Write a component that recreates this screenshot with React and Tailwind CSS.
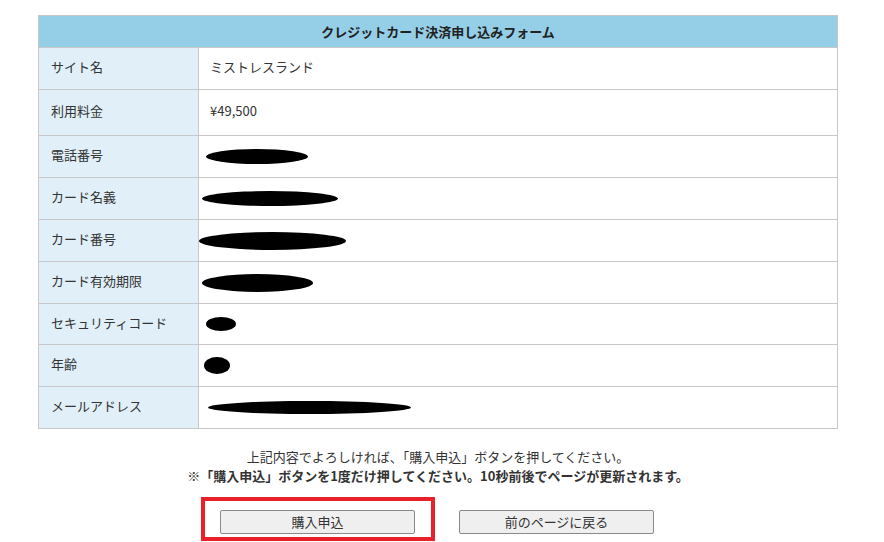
import React from 'react';

const rows = [
  { label: 'サイト名', value: 'ミストレスランド', h: 'h-[42px]' },
  { label: '利用料金', value: '¥49,500', h: 'h-[46px]' },
  { label: '電話番号', blob: { ml: 'ml-[7px]', w: 102, h: 15 }, h: 'h-[42px]' },
  { label: 'カード名義', blob: { ml: 'ml-[3px]', w: 136, h: 15 }, h: 'h-[42px]' },
  { label: 'カード番号', blob: { ml: 'ml-[0px]', w: 147, h: 18 }, h: 'h-[42px]' },
  { label: 'カード有効期限', blob: { ml: 'ml-[3px]', w: 111, h: 18 }, h: 'h-[42px]' },
  { label: 'セキュリティコード', blob: { ml: 'ml-[7px]', w: 30, h: 14 }, h: 'h-[41px]' },
  { label: '年齢', blob: { ml: 'ml-[5px]', w: 26, h: 17 }, h: 'h-[42px]' },
  { label: 'メールアドレス', blob: { ml: 'ml-[9px]', w: 203, h: 13 }, h: 'h-[42px]' },
];

// redaction marks drawn over the personal data
const Blob = ({ ml, w, h }) => (
  <svg width={w} height={h} viewBox={`0 0 ${w} ${h}`} className={`block ${ml}`}>
    <ellipse cx={w / 2} cy={h / 2} rx={w / 2} ry={h / 2} fill="#000" />
  </svg>
);

export default function App() {
  return (
    <div className="min-h-screen bg-white text-[#333] text-[13px] font-['Noto_Sans_CJK_JP','Noto_Sans',sans-serif]">
      <div className="ml-[38px] w-[800px] pt-[15px]">
        <table className="w-full border-collapse">
          <thead>
            <tr className="h-[32px]">
              <th colSpan={2} className="bg-[#94cfe7] border border-[#c8c8c8] font-bold text-center text-[#222]">
                クレジットカード決済申し込みフォーム
              </th>
            </tr>
          </thead>
          <tbody>
            {rows.map((r) => (
              <tr key={r.label} className={r.h}>
                <td className="w-[160px] bg-[#e0eff8] border border-[#c8c8c8] pl-[12px] p-0 pb-[3px]">{r.label}</td>
                <td className="border border-[#c8c8c8] pl-[11px] p-0 pb-[3px]">
                  {r.blob ? <div className="-ml-[11px] pt-[3px]"><Blob {...r.blob} /></div> : r.value}
                </td>
              </tr>
            ))}
          </tbody>
        </table>

        <div className="mt-[18px] text-center leading-[19px]">
          <p>上記内容でよろしければ、「購入申込」ボタンを押してください。</p>
          <p className="font-bold">※「購入申込」ボタンを1度だけ押してください。10秒前後でページが更新されます。</p>
        </div>

        <div className="flex items-start pl-[163px] mt-[12px]">
          <div className="border-4 border-[#e8202a] pl-[15px] pr-[16px] pt-[9px] pb-[3px]">
            <button className="w-[195px] h-[24px] bg-[#efefef] border border-[#8a8a8a] rounded-[2px] text-[13px] text-[#333]">
              購入申込
            </button>
          </div>
          <button className="ml-[24px] mt-[13px] w-[195px] h-[24px] bg-[#efefef] border border-[#8a8a8a] rounded-[2px] text-[13px] text-[#333]">
            前のページに戻る
          </button>
        </div>
      </div>
    </div>
  );
}
